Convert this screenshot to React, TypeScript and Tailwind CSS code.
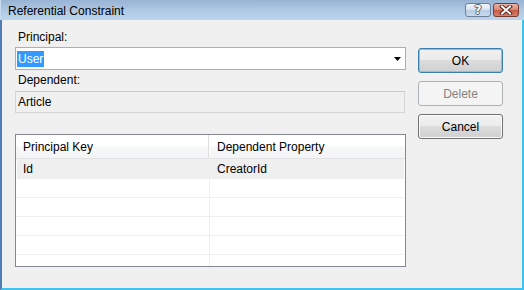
import React from "react";

const btnBase =
  "h-[25px] w-[85px] rounded-[3px] flex items-center justify-center text-[12px] leading-none";

function CloseGlyph() {
  return (
    <svg width="14" height="10" viewBox="0 0 14 10">
      <path d="M3 1.5 L11 8.5 M11 1.5 L3 8.5" stroke="#5a2a22" strokeWidth="4" strokeLinecap="square" />
      <path d="M3 1.5 L11 8.5 M11 1.5 L3 8.5" stroke="#ffffff" strokeWidth="2" strokeLinecap="square" />
    </svg>
  );
}

export default function App() {
  const emptyRows = [0, 1, 2, 3, 4];
  return (
    <div className="w-[524px] h-[290px] flex flex-col overflow-hidden font-['Liberation_Sans',Arial,sans-serif] text-[12px] text-black">
      {/* Title bar */}
      <div className="h-[20px] shrink-0 flex items-start pl-[7px] pr-[5px] bg-[linear-gradient(to_bottom,#98b4d5,#b2cbe6_60%,#bcd4ec)] border-l border-l-[#c9dbee]">
        <div className="h-[20px] flex items-center text-[12px] leading-none pt-[1px]">Referential Constraint</div>
        <div className="ml-auto mt-[3px] flex gap-[2px]">
          <div className="w-[26px] h-[14px] rounded-[3px] border border-[#6b7f98] bg-[linear-gradient(to_bottom,#f1f5fa,#d6e2f0_50%,#b8cbe2_51%,#c9daee)] flex items-center justify-center">
            <span className="text-white font-bold text-[12px] leading-none font-['DejaVu_Sans',sans-serif] [text-shadow:1px_0_#4d6079,-1px_0_#4d6079,0_1px_#4d6079,0_-1px_#4d6079]">
              ?
            </span>
          </div>
          <div className="w-[26px] h-[14px] rounded-[3px] border border-[#7a3a2f] bg-[linear-gradient(to_bottom,#eab4a6,#d98672_50%,#c65a43_51%,#d8826b)] flex items-center justify-center">
            <CloseGlyph />
          </div>
        </div>
      </div>

      {/* Client area */}
      <div className="flex-1 flex bg-[#f0f0f0] border-l-2 border-l-[#4f7db1] border-r-2 border-r-[#3ec4ef] border-b-2 border-b-[#3ec4ef] pl-[13px]">
        {/* Left column */}
        <div className="w-[391px] flex flex-col pt-[9px]">
          <div className="h-[16px] shrink-0 flex items-center pl-[3px]">Principal:</div>
          <div className="mt-[2px] h-[23px] shrink-0 border border-[#88b9e6] bg-white flex items-center pl-[1px] pr-[4px]">
            <span className="h-[16px] bg-[#3399ff] text-white px-[1px] flex items-center">User</span>
            <svg className="ml-auto" width="7" height="4" viewBox="0 0 7 4">
              <path d="M0 0 H7 L3.5 4 Z" fill="#000" />
            </svg>
          </div>
          <div className="mt-[2px] h-[16px] shrink-0 flex items-center pl-[3px]">Dependent:</div>
          <div className="mt-[3px] h-[22px] shrink-0 w-[390px] border border-[#d5d5d5] border-t-[#c8c8c8] bg-[#f0f0f0] flex items-center pl-[2px]">
            Article
          </div>

          {/* Grid */}
          <div className="mt-[21px] h-[133px] shrink-0 border border-[#828790] bg-white flex flex-col overflow-hidden">
            <div className="h-[24px] shrink-0 flex border-b border-b-[#e2e2e2] bg-[linear-gradient(to_bottom,#ffffff,#ffffff_45%,#f6f7f8_55%,#f3f4f5)]">
              <div className="w-[193px] border-r border-r-[#dedede] flex items-center pl-[7px]">Principal Key</div>
              <div className="flex-1 flex items-center pl-[7px] border-l border-l-[#fbfbfb]">Dependent Property</div>
            </div>
            <div className="h-[20px] shrink-0 flex bg-[#efefef] ml-[1px] mr-[1px]">
              <div className="w-[193px] flex items-center pl-[6px]">Id</div>
              <div className="flex-1 flex items-center pl-[7px]">CreatorId</div>
            </div>
            {emptyRows.map((i) => (
              <div key={i} className="h-[19px] flex shrink-0 border-b border-b-[#efefef] mr-[1px]">
                <div className="w-[194px] border-r border-r-[#efefef]" />
                <div className="flex-1" />
              </div>
            ))}
          </div>
        </div>

        {/* Right column: buttons */}
        <div className="ml-[12px] pt-[28px] flex flex-col gap-[8px]">
          <button className={`${btnBase} border border-[#3c7fb1] bg-[linear-gradient(to_bottom,#f0f0f0,#eaeaea_50%,#dcdcdc_50%,#d0d0d0)] shadow-[inset_0_0_0_1px_#62d2f6]`}>
            OK
          </button>
          <button className={`${btnBase} border border-[#adb2b5] bg-[#f4f4f4] text-[#838383]`}>
            Delete
          </button>
          <button className={`${btnBase} border border-[#707070] bg-[linear-gradient(to_bottom,#f2f2f2,#ebebeb_50%,#dddddd_50%,#cfcfcf)] shadow-[inset_0_0_0_1px_#fcfcfc]`}>
            Cancel
          </button>
        </div>
      </div>
    </div>
  );
}
